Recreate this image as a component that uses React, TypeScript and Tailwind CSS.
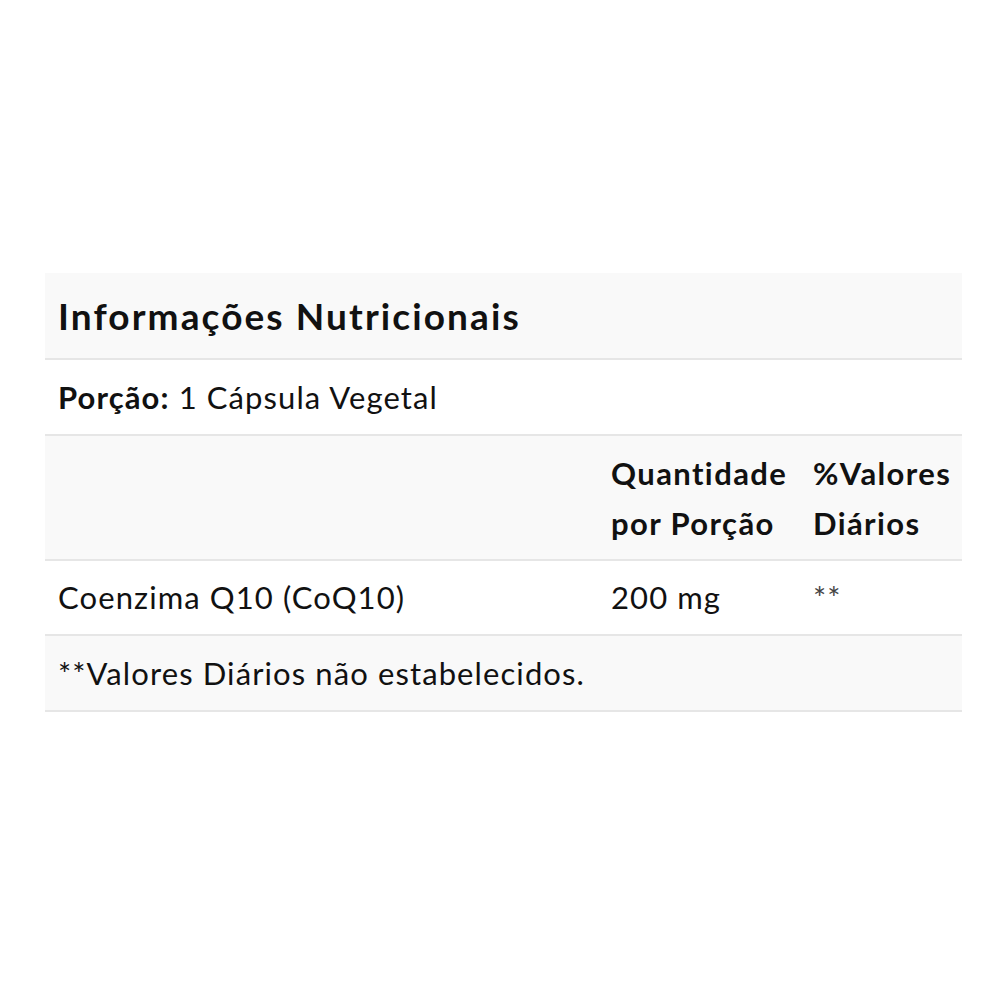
import React from 'react';

const cell = 'border-b-2 border-[#e6e6e6] px-[13px] align-middle';
const body = 'text-[31px] tracking-[1.1px] [font-variant-ligatures:none]';

const App: React.FC = () => {
  return (
    <div className="w-[1000px] h-[1000px] bg-white flex flex-col pt-[273px] pl-[45px] font-['Lato','Liberation_Sans',sans-serif] text-[#111]">
      <table className="w-[917px] border-collapse table-fixed">
        <colgroup>
          <col className="w-[553px]" />
          <col className="w-[202px]" />
          <col className="w-[162px]" />
        </colgroup>
        <tbody>
          <tr className="bg-[#f9f9f9] h-[86px]">
            <td colSpan={3} className={cell}>
              <span className="text-[37px] font-bold tracking-[2.1px] [font-variant-ligatures:none]">Informações Nutricionais</span>
            </td>
          </tr>
          <tr className="bg-white h-[76px]">
            <td colSpan={3} className={cell}>
              <span className={body}><b>Porção:</b> 1 Cápsula Vegetal</span>
            </td>
          </tr>
          <tr className="bg-[#f9f9f9] h-[125px]">
            <td className={cell}></td>
            <td className={`${cell} ${body} tracking-[1.4px] font-bold leading-[50px]`}>
              Quantidade<br />por Porção
            </td>
            <td className={`${cell} ${body} tracking-[1.4px] font-bold leading-[50px]`}>
              %Valores<br />Diários
            </td>
          </tr>
          <tr className="bg-white h-[75px]">
            <td className={`${cell} ${body}`}>Coenzima Q10 (CoQ10)</td>
            <td className={`${cell} ${body}`}>200 mg</td>
            <td className={`${cell} ${body} text-[#444]`}>**</td>
          </tr>
          <tr className="bg-[#f9f9f9] h-[76px]">
            <td colSpan={3} className={cell}>
              <span className={body}>**Valores Diários não estabelecidos.</span>
            </td>
          </tr>
        </tbody>
      </table>
    </div>
  );
};

export default App;
